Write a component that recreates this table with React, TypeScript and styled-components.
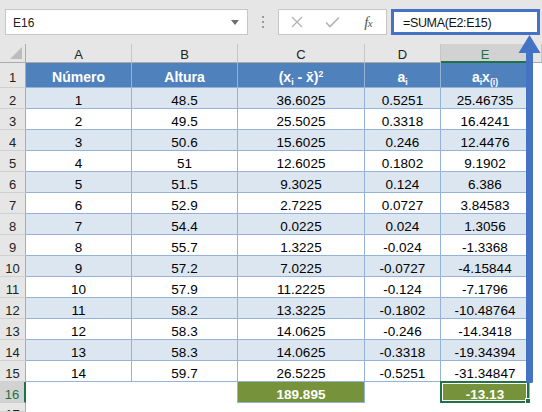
import React from "react";
import styled, { createGlobalStyle, css } from "styled-components";

const Global = createGlobalStyle`
  html, body { margin: 0; padding: 0; background: #e6e6e6; }
  body { font-family: "Liberation Sans", Arial, sans-serif; }
  #root { width: 542px; height: 412px; }
`;

const Frame = styled.div`
  position: relative;
  width: 542px;
  height: 412px;
  overflow: hidden;
  background: #e6e6e6;
  display: flex;
  flex-direction: column;
`;

const FormulaBar = styled.div`
  flex: 0 0 auto;
  display: flex;
  align-items: stretch;
  height: 26px;
  padding: 9px 2px 0 5px;
  margin-bottom: 9px;
`;

const NameBox = styled.div`
  box-sizing: border-box;
  width: 243px;
  background: #fff;
  border: 1px solid #c6c6c6;
  display: flex;
  align-items: center;
  justify-content: space-between;
  padding: 1px 8px 0 7px;
  font-size: 12px;
  color: #222;
`;

const DropArrow = styled.span`
  width: 0;
  height: 0;
  border-left: 4px solid transparent;
  border-right: 4px solid transparent;
  border-top: 5px solid #6e6e6e;
`;

const Grip = styled.div`
  width: 30px;
  display: flex;
  flex-direction: column;
  align-items: center;
  justify-content: center;
  gap: 3px;
  & > i {
    display: block;
    width: 2px;
    height: 2px;
    background: #9a9a9a;
  }
`;

const FuncBox = styled.div`
  box-sizing: border-box;
  width: 109px;
  background: #fff;
  border: 1px solid #c6c6c6;
  display: flex;
  align-items: center;
`;

const FuncSlot = styled.div`
  width: 36px;
  display: flex;
  justify-content: center;
  align-items: center;
`;

const Fx = styled.span`
  font-family: "Liberation Serif", "Times New Roman", serif;
  font-style: italic;
  font-size: 15px;
  color: #555;
  letter-spacing: -0.5px;
  & > small {
    font-size: 11px;
  }
`;

const FormulaInput = styled.div`
  box-sizing: border-box;
  width: 149px;
  margin-left: 4px;
  background: #fff;
  border: 3px solid #4472c4;
  display: flex;
  align-items: center;
  padding: 1px 0 0 9px;
  font-size: 12.5px;
  letter-spacing: -0.35px;
  color: #111;
`;

const Sheet = styled.div`
  flex: 1 1 auto;
  min-height: 0;
  overflow: hidden;
  display: grid;
  grid-template-columns: 26px 106px 106px 127px 76px 89px 1fr;
  grid-template-rows: 19px 25px repeat(15, 21px) minmax(0, 1fr);
  font-size: 13.5px;
  color: #000;
`;

const Corner = styled.div`
  box-sizing: border-box;
  background: #e6e6e6;
  border-right: 1px solid #ababab;
  border-bottom: 1px solid #ababab;
  display: flex;
  justify-content: flex-end;
  align-items: flex-end;
  padding: 0 3px 3px 0;
  &::after {
    content: "";
    width: 0;
    height: 0;
    border-left: 12px solid transparent;
    border-bottom: 12px solid #bcbcbc;
  }
`;

const ColHead = styled.div<{ $active?: boolean }>`
  box-sizing: border-box;
  background: ${(p) => (p.$active ? "#d2d2d2" : "#e6e6e6")};
  color: ${(p) => (p.$active ? "#217346" : "#222")};
  border-right: 1px solid ${(p) => (p.$active ? "#ababab" : "#c6c6c6")};
  border-bottom: ${(p) => (p.$active ? "2px solid #217346" : "1px solid #ababab")};
  display: flex;
  align-items: center;
  justify-content: center;
  padding-top: 3px;
  font-size: 13px;
`;

const RowHead = styled.div<{ $active?: boolean; $last?: boolean }>`
  box-sizing: border-box;
  background: ${(p) => (p.$active ? "#d2d2d2" : "#e6e6e6")};
  color: ${(p) => (p.$active ? "#217346" : "#222")};
  border-right: ${(p) => (p.$active ? "2px solid #217346" : "1px solid #ababab")};
  border-bottom: 1px solid #d0d0d0;
  display: flex;
  align-items: ${(p) => (p.$last ? "flex-start" : "center")};
  justify-content: center;
  padding-top: 4px;
  font-size: 13px;
  overflow: hidden;
`;

type Kind = "head" | "even" | "odd" | "blank" | "total";

const cellBg: Record<Kind, string> = {
  head: "#4f81bd",
  even: "#dce6f1",
  odd: "#ffffff",
  blank: "#ffffff",
  total: "#76933c",
};

const Cell = styled.div<{ $kind: Kind; $lineRight?: boolean; $selected?: boolean }>`
  box-sizing: border-box;
  position: relative;
  background: ${(p) => cellBg[p.$kind]};
  display: flex;
  align-items: center;
  justify-content: center;
  padding-top: 4px;
  white-space: nowrap;
  ${(p) =>
    p.$kind !== "blank" &&
    css`
      border-right: 1px solid #95b3d7;
      border-bottom: 1px solid #95b3d7;
    `}
  ${(p) =>
    p.$lineRight &&
    css`
      border-right: 1px solid #95b3d7;
    `}
  ${(p) =>
    p.$kind === "head" &&
    css`
      font-size: 14px;
    `}
  ${(p) =>
    (p.$kind === "head" || p.$kind === "total") &&
    css`
      color: #fff;
      font-weight: bold;
    `}
  ${(p) =>
    p.$selected &&
    css`
      &::before {
        content: "";
        position: absolute;
        left: -1px;
        top: -1px;
        right: 0;
        bottom: -1px;
        border: 2px solid #217346;
        box-shadow: inset 0 0 0 1px #fff;
      }
      &::after {
        content: "";
        position: absolute;
        right: -3px;
        bottom: -3px;
        width: 5px;
        height: 5px;
        background: #217346;
        border: 1px solid #fff;
      }
    `}
`;

const Label = styled.span`
  display: inline-block;
  line-height: 1.15;
`;

const Sub = styled.sub`
  font-size: 0.62em;
  vertical-align: -0.3em;
  line-height: 0;
`;

const Sup = styled.sup`
  font-size: 0.62em;
  vertical-align: 0.6em;
  line-height: 0;
`;

const Arrow = styled.svg`
  position: absolute;
  left: 515px;
  top: 30px;
  pointer-events: none;
`;

const data: string[][] = [
  ["1", "48.5", "36.6025", "0.5251", "25.46735"],
  ["2", "49.5", "25.5025", "0.3318", "16.4241"],
  ["3", "50.6", "15.6025", "0.246", "12.4476"],
  ["4", "51", "12.6025", "0.1802", "9.1902"],
  ["5", "51.5", "9.3025", "0.124", "6.386"],
  ["6", "52.9", "2.7225", "0.0727", "3.84583"],
  ["7", "54.4", "0.0225", "0.024", "1.3056"],
  ["8", "55.7", "1.3225", "-0.024", "-1.3368"],
  ["9", "57.2", "7.0225", "-0.0727", "-4.15844"],
  ["10", "57.9", "11.2225", "-0.124", "-7.1796"],
  ["11", "58.2", "13.3225", "-0.1802", "-10.48764"],
  ["12", "58.3", "14.0625", "-0.246", "-14.3418"],
  ["13", "58.3", "14.0625", "-0.3318", "-19.34394"],
  ["14", "59.7", "26.5225", "-0.5251", "-31.34847"],
];

const letters = ["A", "B", "C", "D", "E"];

export default function App() {
  return (
    <Frame>
      <Global />
      <FormulaBar>
        <NameBox>
          <span>E16</span>
          <DropArrow />
        </NameBox>
        <Grip>
          <i />
          <i />
          <i />
        </Grip>
        <FuncBox>
          <FuncSlot>
            <svg width="12" height="12" viewBox="0 0 12 12">
              <path d="M1 1 L11 11 M11 1 L1 11" stroke="#b3b3b3" strokeWidth="1.4" fill="none" />
            </svg>
          </FuncSlot>
          <FuncSlot>
            <svg width="15" height="12" viewBox="0 0 15 12">
              <path d="M1 6.5 L5 10.5 L14 1.5" stroke="#b3b3b3" strokeWidth="1.6" fill="none" />
            </svg>
          </FuncSlot>
          <FuncSlot>
            <Fx>
              f<small>x</small>
            </Fx>
          </FuncSlot>
        </FuncBox>
        <FormulaInput>=SUMA(E2:E15)</FormulaInput>
      </FormulaBar>

      <Sheet>
        <Corner />
        {letters.map((l) => (
          <ColHead key={l} $active={l === "E"}>
            {l}
          </ColHead>
        ))}
        <ColHead />

        <RowHead>1</RowHead>
        <Cell $kind="head">Número</Cell>
        <Cell $kind="head">Altura</Cell>
        <Cell $kind="head">
          <Label>
            (x<Sub>i</Sub> - x&#772;)<Sup>2</Sup>
          </Label>
        </Cell>
        <Cell $kind="head">
          <Label>
            a<Sub>i</Sub>
          </Label>
        </Cell>
        <Cell $kind="head">
          <Label>
            a<Sub>i</Sub>x<Sub>(i)</Sub>
          </Label>
        </Cell>
        <Cell $kind="blank" />

        {data.map((row, i) => {
          const kind: Kind = i % 2 === 0 ? "even" : "odd";
          return (
            <React.Fragment key={i}>
              <RowHead>{i + 2}</RowHead>
              {row.map((v, j) => (
                <Cell key={j} $kind={kind}>
                  {v}
                </Cell>
              ))}
              <Cell $kind="blank" />
            </React.Fragment>
          );
        })}

        <RowHead $active>16</RowHead>
        <Cell $kind="blank" />
        <Cell $kind="blank" $lineRight />
        <Cell $kind="total">189.895</Cell>
        <Cell $kind="blank" />
        <Cell $kind="total" $selected>
          -13.13
        </Cell>
        <Cell $kind="blank" />

        <RowHead $last>17</RowHead>
        <Cell $kind="blank" />
        <Cell $kind="blank" />
        <Cell $kind="blank" />
        <Cell $kind="blank" />
        <Cell $kind="blank" />
        <Cell $kind="blank" />
      </Sheet>

      <Arrow width="30" height="360" viewBox="515 30 30 360">
        <polygon points="529.5,35 540.5,53 518.5,53" fill="#4472c4" />
        <rect x="526" y="52" width="7" height="331" rx="1.5" fill="#4472c4" />
      </Arrow>
    </Frame>
  );
}
